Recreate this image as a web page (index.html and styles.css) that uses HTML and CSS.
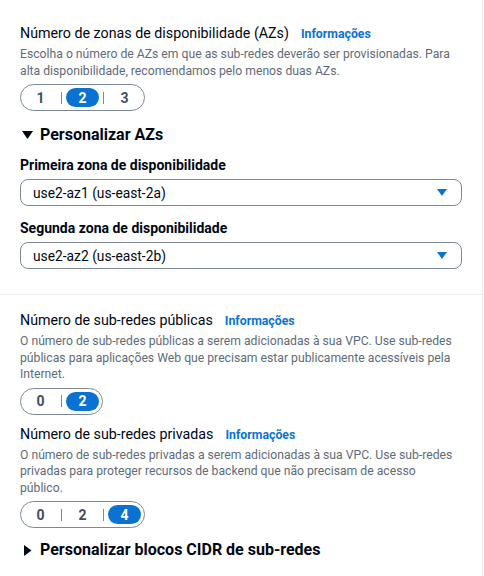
FILE: index.html
```html
<!DOCTYPE html>
<html lang="pt">
<head>
<meta charset="utf-8">
<link rel="stylesheet" href="styles.css">
</head>
<body>
<div class="panel">
  <section class="block top">
    <div class="field">
      <div class="label"><span>Número de zonas de disponibilidade (AZs)</span><a class="info">Informações</a></div>
      <p class="desc">Escolha o número de AZs em que as sub-redes deverão ser provisionadas. Para alta disponibilidade, recomendamos pelo menos duas AZs.</p>
      <div class="seg">
        <span class="opt">1</span><span class="sep"></span><span class="opt on">2</span><span class="sep"></span><span class="opt">3</span>
      </div>
    </div>
    <div class="expander open">
      <svg class="tri" viewBox="0 0 11 8" width="11" height="8"><path d="M0 0 H11 L5.5 8 Z" fill="#000716"/></svg>
      <span>Personalizar AZs</span>
    </div>
    <div class="sel-field">
      <div class="sel-label">Primeira zona de disponibilidade</div>
      <div class="select"><span>use2-az1 (us-east-2a)</span><svg class="caret" viewBox="0 0 10 7" width="10" height="7"><path d="M0 0 H10 L5 7 Z" fill="#0972d3"/></svg></div>
    </div>
    <div class="sel-field">
      <div class="sel-label">Segunda zona de disponibilidade</div>
      <div class="select"><span>use2-az2 (us-east-2b)</span><svg class="caret" viewBox="0 0 10 7" width="10" height="7"><path d="M0 0 H10 L5 7 Z" fill="#0972d3"/></svg></div>
    </div>
  </section>
  <section class="block bottom">
    <div class="field">
      <div class="label"><span>Número de sub-redes públicas</span><a class="info">Informações</a></div>
      <p class="desc">O número de sub-redes públicas a serem adicionadas à sua VPC. Use <span class="nw">sub-redes</span> públicas para aplicações Web que precisam estar publicamente acessíveis pela Internet.</p>
      <div class="seg">
        <span class="opt">0</span><span class="sep"></span><span class="opt on">2</span>
      </div>
    </div>
    <div class="field second">
      <div class="label"><span>Número de sub-redes privadas</span><a class="info">Informações</a></div>
      <p class="desc">O número de sub-redes privadas a serem adicionadas à sua VPC. Use <span class="nw">sub-redes</span> privadas para proteger recursos de backend que não precisam de acesso público.</p>
      <div class="seg">
        <span class="opt">0</span><span class="sep"></span><span class="opt">2</span><span class="sep"></span><span class="opt on">4</span>
      </div>
    </div>
    <div class="expander">
      <svg class="tri" viewBox="0 0 11 11" width="11" height="11"><path d="M2 0 V11 L9.5 5.5 Z" fill="#000716"/></svg>
      <span>Personalizar blocos CIDR de sub-redes</span>
    </div>
  </section>
</div>
</body>
</html>
```

FILE: styles.css
```css
* { box-sizing: border-box; }
html, body { margin: 0; padding: 0; background: #fff; }
body {
  font-family: Roboto, "Open Sans", Arial, sans-serif;
  color: #000716;
  font-size: 14px;
}
.panel {
  width: 483px;
  height: 576px;
  border-right: 1px solid #e9ebed;
}
.block { padding: 0 20px; }
.top { padding-top: 24px; padding-bottom: 25px; border-bottom: 1px solid #e9ebed; }
.bottom { padding-top: 16px; }
.field { display: flex; flex-direction: column; }
.field.second { margin-top: 10px; }
.label { display: flex; align-items: baseline; gap: 12px; font-size: 14.25px; line-height: 18px; }
.info { color: #0972d3; font-weight: 700; font-size: 12.3px; }
.desc { margin: 3px 0 5px; max-width: 436px; color: #5f6b7a; font-size: 12.2px; line-height: 16.5px; }
.nw { white-space: nowrap; }
.seg {
  display: inline-flex; align-self: flex-start; align-items: center;
  height: 27px; padding: 0 3px; border: 1px solid #7d8998; border-radius: 14px;
}
.opt {
  width: 33px; height: 19px; border-radius: 10px;
  display: flex; align-items: center; justify-content: center;
  font-weight: 700; font-size: 14px; color: #414d5c;
}
.opt.on { background: #0972d3; color: #fff; }
.sep { width: 1px; height: 12px; background: #7d8998; margin: 0 4px; }
.expander { display: flex; align-items: center; gap: 7px; margin-top: 14px; font-weight: 700; font-size: 16px; line-height: 20px; }
.tri { margin-left: 2px; }
.sel-field { margin-top: 10px; }
.sel-field + .sel-field { margin-top: 12px; }
.sel-label { font-weight: 700; font-size: 14px; line-height: 20px; margin-bottom: 4px; }
.select {
  height: 27px; border: 1px solid #7d8998; border-radius: 8px;
  display: flex; align-items: center; justify-content: space-between;
  padding: 0 14px 0 12px; font-size: 13.8px;
}
.bottom .expander { margin-top: 12px; }
```
